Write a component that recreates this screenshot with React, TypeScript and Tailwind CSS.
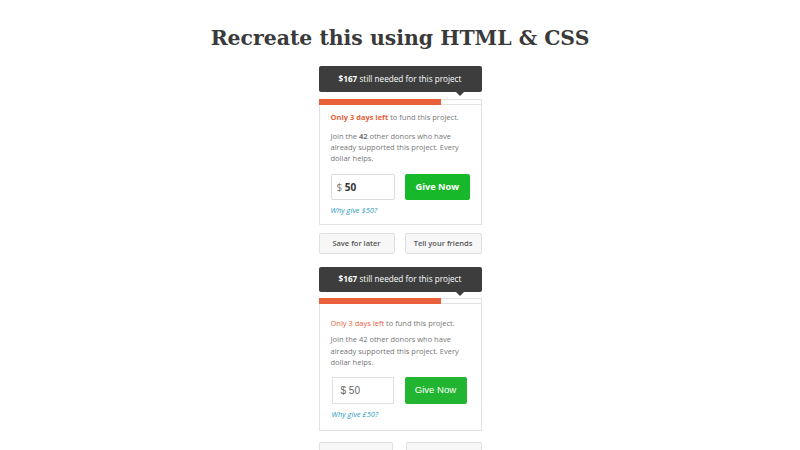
import React from "react";

function Widget({ v2 }: { v2?: boolean }) {
  return (
    <div className="w-[163px] flex flex-col font-['Open_Sans',sans-serif]">
      <div className={`relative ${v2 ? "h-[25px]" : "h-[26px]"} bg-[#3d3d3d] rounded-[2px] flex items-center justify-center text-white text-[8.2px]`}>
        <span>
          <b className="font-bold">$167</b> still needed for this project
        </span>
        <div className="absolute left-[137px] bottom-[-4px] w-0 h-0 border-l-[4px] border-r-[4px] border-t-[4px] border-l-transparent border-r-transparent border-t-[#3d3d3d]" />
      </div>
      <div className={`${v2 ? "mt-[6px]" : "mt-[7px]"} h-[6px] border border-[#e3e3e3] bg-white flex`}>
        <div className="w-[122px] bg-[#e9603a] -m-px h-[6px]" />
      </div>
      <div className={`border border-t-0 border-[#e3e3e3] px-[11px] ${v2 ? "pt-[13px] pb-[11px]" : "pt-[6px] pb-[9px]"} text-[7.5px] text-[#777]`}>
        <p className="leading-[12px]">
          <span className={`text-[#e9603a] ${v2 ? "" : "font-bold"}`}>Only 3 days left</span> to fund this project.
        </p>
        <p className={`${v2 ? "mt-[5px] leading-[11.5px]" : "mt-[8px] leading-[11px]"}`}>
          Join the {v2 ? "42" : <b className="font-bold">42</b>} other donors who have already supported this project. Every dollar helps.
        </p>
        <div className={`${v2 ? "mt-[8px] pl-px gap-[11px]" : "mt-[10px] gap-[10px]"} flex`}>
          {v2 ? (
            <div className="w-[62px] h-[27px] border border-[#e0e0e0] flex items-center pl-[8px] text-[10px] text-[#666] font-['Liberation_Sans',sans-serif]">
              $ 50
            </div>
          ) : (
            <div className="w-[65px] h-[26px] border border-[#dcdcdc] rounded-[2px] flex items-center pl-[5px] text-[10px] text-[#777]">
              $&nbsp;<b className="font-bold text-[#333]">50</b>
            </div>
          )}
          {v2 ? (
            <div className="w-[62px] h-[27px] bg-[#22b531] rounded-[2px] flex items-center justify-center text-white text-[9.6px] font-['Liberation_Sans',sans-serif]">
              Give Now
            </div>
          ) : (
            <div className="w-[65px] h-[26px] bg-[#17b82a] rounded-[2px] flex items-center justify-center text-white text-[9.2px] font-bold">
              Give Now
            </div>
          )}
        </div>
        <p className={`${v2 ? "mt-[5px] pl-px" : "mt-[5px]"} italic text-[#2a9cc0] text-[7.5px] leading-[10px]`}>
          {v2 ? "Why give £50?" : "Why give $50?"}
        </p>
      </div>
      <div className={`${v2 ? "mt-[11px]" : "mt-[8px]"} flex justify-between`}>
        <div className={`${v2 ? "w-[74px] h-[22px]" : "w-[76px] h-[21px]"} border border-[#e0e0e0] bg-[#f7f7f7] rounded-[2px] flex items-center justify-center text-[7.5px] text-[#555] font-semibold`}>
          Save for later
        </div>
        <div className={`${v2 ? "w-[76px] h-[22px]" : "w-[77px] h-[21px]"} border border-[#e0e0e0] bg-[#f7f7f7] rounded-[2px] flex items-center justify-center text-[7.5px] text-[#555] font-semibold`}>
          Tell your friends
        </div>
      </div>
    </div>
  );
}

export default function App() {
  return (
    <div className="w-[800px] h-[450px] overflow-hidden bg-white flex flex-col items-center">
      <h1 className="mt-[22px] font-['DejaVu_Serif',serif] font-bold text-[20.4px] leading-[32px] text-[#3a3a3a]">
        Recreate this using HTML &amp; CSS
      </h1>
      <div className="mt-[12px]">
        <Widget />
      </div>
      <div className="mt-[13px]">
        <Widget v2 />
      </div>
    </div>
  );
}
